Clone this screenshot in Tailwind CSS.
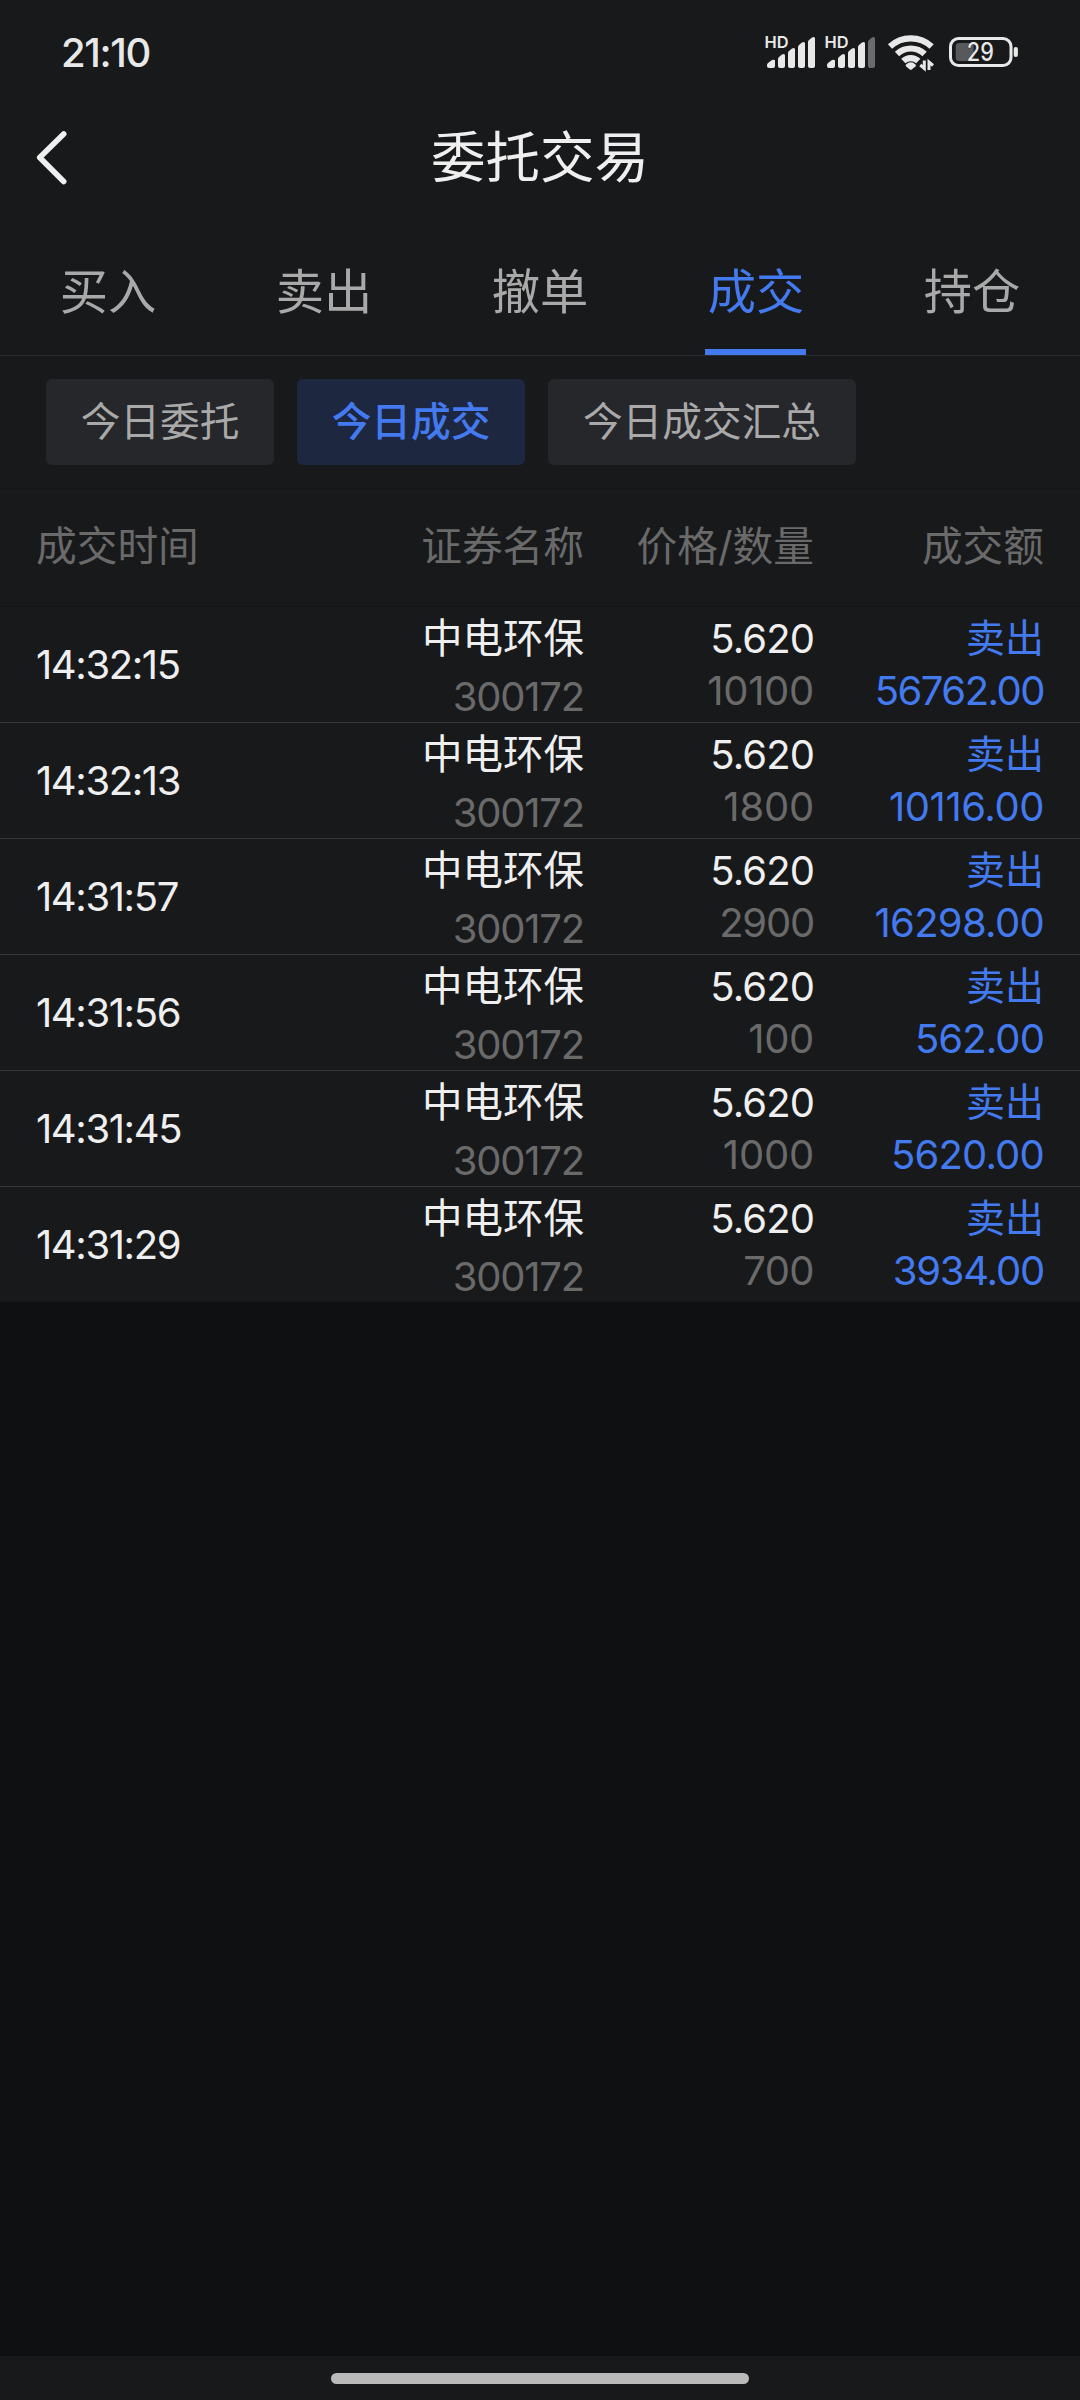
<!DOCTYPE html>
<html lang="zh-CN">
<head>
<meta charset="utf-8">
<title>委托交易</title>
<script src="https://cdn.jsdelivr.net/npm/@tailwindcss/browser@4"></script>
</head>
<body class="bg-[#0f1012]">
<div class="flex h-[2400px] w-[1080px] flex-col overflow-hidden font-['Inter','Noto_Sans_CJK_SC',sans-serif] text-[#efefef]">

  <!-- status bar -->
  <div class="flex h-[104px] shrink-0 items-center justify-between bg-[#18191b] pl-[61px]">
    <span class="pt-[1px] text-[40px] leading-[44px] font-medium tracking-[-1.4px] text-[#e8e8e8]">21:10</span>
    <svg class="h-[104px] w-[320px]" viewBox="760 0 320 104" fill="#e8e8e8">
      <text x="764.5" y="48.2" font-size="16.5" font-weight="600" textLength="24" lengthAdjust="spacingAndGlyphs">HD</text>
      <text x="824.5" y="48.2" font-size="16.5" font-weight="600" textLength="24" lengthAdjust="spacingAndGlyphs">HD</text>
      <g id="bars">
        <path d="M767 65q0-1 1-2l4-3q3-1 3 1v5q0 2-2 2h-4q-2 0-2-2z"/>
        <path d="M778 59q0-1 1-2l3-2.500q3-1.500 3 1v10.500q0 2-2 2h-3q-2 0-2-2z"/>
        <path d="M788 53q0-1 1-2l3-2.500q3-1.500 3 1v16.500q0 2-2 2h-3q-2 0-2-2z"/>
        <path d="M798 47q0-1 1-2l3-2.500q3-1.500 3 1v22.500q0 2-2 2h-3q-2 0-2-2z"/>
      </g>
      <path d="M808 42q0-1 1-2l3-2.500q3-1.500 3 1v27.500q0 2-2 2h-3q-2 0-2-2z"/>
      <use href="#bars" x="60"/>
      <path transform="translate(60)" fill="#6b6b6e" d="M808 42q0-1 1-2l3-2.500q3-1.500 3 1v27.500q0 2-2 2h-3q-2 0-2-2z"/>
      <g fill="none" stroke="#e8e8e8" stroke-width="6.200">
        <path d="M890 46.500a30.500 30.500 0 0 1 41.600 0"/>
        <path d="M897 54a20 20 0 0 1 27.600 0"/>
        <path d="M903.300 61a11 11 0 0 1 15 0"/>
      </g>
      <path d="M906 64.500q4.800-4.500 9.600 0q.8 1-.2 2l-3.300 2.800q-1.300 1-2.600 0l-3.300-2.800q-1-1-.2-2z"/>
      <path fill="none" stroke="#e8e8e8" stroke-width="3" d="M924.300 60.500v8l-4-3.500M929 70v-8l4 3.500"/>
      <rect x="950.500" y="38.500" width="60.500" height="27" rx="8" fill="none" stroke="#e8e8e8" stroke-width="3"/>
      <rect x="955.700" y="43" width="18" height="18" rx="3.500" fill="#58595b"/>
      <rect x="1013.700" y="47" width="4.200" height="10" rx="2"/>
      <text x="980.300" y="61.200" font-size="25" font-weight="500" text-anchor="middle" textLength="27" lengthAdjust="spacingAndGlyphs" stroke="#18191b" stroke-width="1" paint-order="stroke">29</text>
    </svg>
  </div>

  <!-- title bar -->
  <header class="grid h-[106px] shrink-0 grid-cols-[120px_1fr_120px] items-center bg-[#18191b]">
    <svg class="h-[106px] w-[120px]" viewBox="0 104 120 106" fill="none" stroke="#efefef" stroke-width="5.600" stroke-linecap="round" stroke-linejoin="round"><path d="M63.700 134L39.700 157.500L63.700 181.500"/></svg>
    <h1 class="text-center text-[54.500px] leading-[60px]">委托交易</h1>
  </header>

  <!-- main tabs -->
  <nav class="grid h-[146px] shrink-0 grid-cols-5 border-b border-[#2b2c2f] bg-[#18191b] text-center text-[48.300px] leading-[60px] text-[#a9a9a9]">
    <div class="pt-[52px]">买入</div>
    <div class="pt-[52px]">卖出</div>
    <div class="pt-[52px]">撤单</div>
    <div class="flex flex-col items-center justify-between pt-[52px] text-[#447af0]">成交<span class="mr-[2px] block h-[6px] w-[101px] bg-[#447af0]"></span></div>
    <div class="pt-[52px]">持仓</div>
  </nav>

  <!-- filter chips -->
  <div class="flex h-[133px] shrink-0 gap-[23px] border-b border-[#151618] bg-[#18191b] pt-[23px] pl-[46px] text-[39.700px] leading-[86px] text-[#a9a9a9]">
    <div class="h-[86px] w-[228px] rounded-[6px] bg-[#26272b] text-center">今日委托</div>
    <div class="h-[86px] w-[228px] rounded-[6px] bg-[#1e2740] text-center font-medium text-[#447af0]">今日成交</div>
    <div class="h-[86px] w-[308px] rounded-[6px] bg-[#26272b] text-center">今日成交汇总</div>
  </div>

  <!-- column headings -->
  <div class="grid h-[117px] shrink-0 grid-cols-[300px_248px_230px_230px] bg-[#18191b] pl-[36px] pt-[25px] text-right text-[40.700px] leading-[66px] text-[#6a6a6a]">
    <span class="text-left">成交时间</span><span>证券名称</span><span>价格/数量</span><span>成交额</span>
  </div>

  <!-- trades -->
  <div id="rows" class="flex shrink-0 flex-col"></div>

  <!-- gesture bar -->
  <div class="mt-auto flex h-[44px] shrink-0 justify-center bg-[#18191b] pt-[17px]">
    <div class="h-[11px] w-[418px] rounded-full bg-[#bababa]"></div>
  </div>
</div>
<script>
  // time, quantity, amount, letter spacing of quantity and of amount
  const trades = [
    ['14:32:15', '10100', '56762.00', -0.3, -1.5],
    ['14:32:13', '1800', '10116.00', -0.2, -0.43],
    ['14:31:57', '2900', '16298.00', -1.2, -0.7],
    ['14:31:56', '100', '562.00', -0.3, -0.9],
    ['14:31:45', '1000', '5620.00', -0.2, -0.8],
    ['14:31:29', '700', '3934.00', -0.6, -1.2],
  ];
  document.getElementById('rows').innerHTML = trades.map(([time, qty, amount, qs, as], i) => `
    <div class="grid h-[116px] grid-cols-[300px_248px_230px_230px] border-t ${i ? 'border-[#37383a]' : 'border-[#131416]'} bg-[#18191b] pl-[36px] text-right text-[40px] leading-[44px]">
      <div class="self-center text-left tracking-[-1.4px]">${time}</div>
      <div class="flex flex-col gap-[14px] pt-[10px]"><span class="text-[40.500px]">中电环保</span><span class="tracking-[-1.2px] text-[#6a6a6a]">300172</span></div>
      <div class="flex flex-col gap-[8px] pt-[10px]"><span class="tracking-[-0.9px]">5.620</span><span class="text-[#6a6a6a]" style="letter-spacing:${qs}px">${qty}</span></div>
      <div class="flex flex-col gap-[9px] pt-[9px] text-[#447af0]"><span class="text-[39px]">卖出</span><span style="letter-spacing:${as}px">${amount}</span></div>
    </div>`).join('');
</script>
</body>
</html>
